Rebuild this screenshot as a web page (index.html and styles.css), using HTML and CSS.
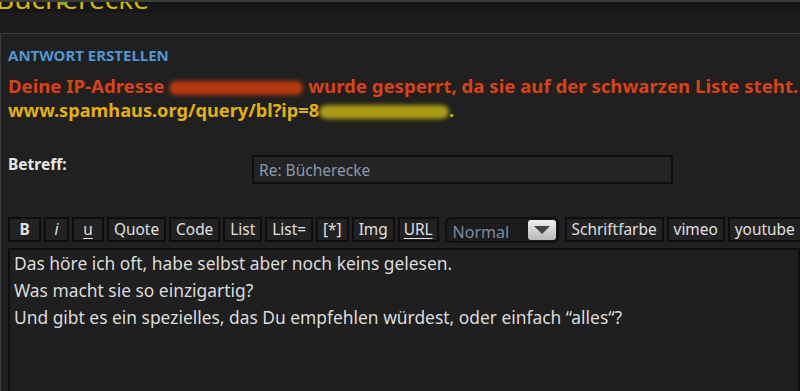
FILE: index.html
```html
<!DOCTYPE html>
<html lang="de">
<head>
    <meta charset="UTF-8">
    <meta name="viewport" content="width=device-width, initial-scale=1.0">
    <title>Antwort erstellen</title>
    <link rel="stylesheet" href="styles.css">
</head>
<body>
    <div class="site-head">
        <span class="head-icon"></span>
        <h1 class="forum-title">Bücherecke</h1>
    </div>

    <div class="panel">
        <h2 class="panel-title">ANTWORT ERSTELLEN</h2>
        <p class="error-line">Deine IP-Adresse <span class="smudge smudge-red"></span> wurde gesperrt, da sie auf der schwarzen Liste steht.</p>
        <p class="link-line">www.spamhaus.org/query/bl?ip=8<span class="smudge smudge-yellow"></span>.</p>

        <div class="subject-row">
            <label class="subject-label" for="subject">Betreff:</label>
            <input class="subject-input" id="subject" type="text" value="Re: Bücherecke">
        </div>

        <div class="toolbar">
            <button class="tb-btn tb-bold">B</button>
            <button class="tb-btn tb-italic">i</button>
            <button class="tb-btn tb-under">u</button>
            <button class="tb-btn">Quote</button>
            <button class="tb-btn">Code</button>
            <button class="tb-btn">List</button>
            <button class="tb-btn">List=</button>
            <button class="tb-btn">[*]</button>
            <button class="tb-btn">Img</button>
            <button class="tb-btn tb-url">URL</button>
            <div class="tb-select">
                <span class="tb-select-value">Normal</span>
                <span class="tb-select-arrow">
                    <svg width="16" height="8" viewBox="0 0 16 8"><path d="M0 0H16L8 8Z" fill="#444"/></svg>
                </span>
            </div>
            <button class="tb-btn">Schriftfarbe</button>
            <button class="tb-btn">vimeo</button>
            <button class="tb-btn">youtube</button>
        </div>

        <div class="message">Das höre ich oft, habe selbst aber noch keins gelesen.
Was macht sie so einzigartig?
Und gibt es ein spezielles, das Du empfehlen würdest, oder einfach “alles“?</div>
    </div>
</body>
</html>
```

FILE: styles.css
```css
* {
    margin: 0;
    padding: 0;
    box-sizing: border-box;
}

body {
    font-family: 'Noto Sans', 'Open Sans', sans-serif;
    background-color: #1c1c1c;
    color: #dddddd;
    overflow: hidden;
}

.site-head {
    height: 33px;
    border-top: 2px solid #3c3c3c;
    background: linear-gradient(#161616 0, #161616 10px, #1c1c1c 11px);
    position: relative;
    overflow: hidden;
}

.forum-title {
    font-size: 28px;
    font-weight: 400;
    color: #d4b800;
    line-height: 1;
    margin-top: -18px;
    margin-left: -4px;
}

.head-icon {
    position: absolute;
    left: 58px;
    top: -6px;
    width: 10px;
    height: 9px;
    border-radius: 50%;
    background: #7fb21e;
}

.panel {
    border-top: 1px solid #3a3a3a;
    border-left: 1px solid #3a3a3a;
    background-color: #202020;
    padding: 12px 0 0 7px;
    min-height: 358px;
}

.panel-title {
    font-size: 15px;
    font-weight: 700;
    color: #4f97d0;
    line-height: 18px;
}

.error-line,
.link-line {
    font-size: 18.2px;
    font-weight: 700;
    line-height: 24px;
    white-space: nowrap;
}

.error-line {
    color: #dc4210;
    font-size: 18.6px;
    margin-top: 10px;
}

.link-line {
    color: #e2b10c;
}

.smudge {
    display: inline-block;
    vertical-align: middle;
    height: 14px;
    border-radius: 7px;
    filter: blur(2px);
}

.smudge-red {
    width: 134px;
    background: #b8360c;
}

.smudge-yellow {
    width: 130px;
    background: #a89a10;
}

.subject-row {
    display: flex;
    align-items: flex-start;
    margin-top: 31px;
}

.subject-label {
    width: 244px;
    font-size: 15.5px;
    font-weight: 700;
    color: #e6e6e6;
}

.subject-input {
    width: 421px;
    height: 29px;
    margin-top: 2px;
    border: 2px solid #0f0f0f;
    background: #242424;
    color: #8b9ab0;
    font-family: inherit;
    font-size: 15.5px;
    padding: 0 5px;
    outline: none;
}

.toolbar {
    display: flex;
    gap: 3px;
    margin-top: 33px;
    white-space: nowrap;
}

.tb-btn {
    flex: none;
    height: 25px;
    border: 2px solid #0e0e0e;
    background: #222222;
    color: #e0e0e0;
    font-family: inherit;
    font-size: 15.4px;
    line-height: 21px;
    padding: 0 5px;
}

.tb-bold {
    width: 33px;
    font-weight: 700;
}

.tb-italic {
    width: 25px;
    font-style: italic;
}

.tb-under {
    width: 32px;
    text-decoration: underline;
    text-underline-offset: 3px;
}

.tb-url {
    padding: 0 4px;
    text-decoration: underline;
    text-underline-offset: 3px;
}

.tb-select {
    flex: none;
    display: flex;
    align-items: center;
    justify-content: space-between;
    width: 114px;
    height: 26px;
    border: 2px solid #0e0e0e;
    border-radius: 6px;
    background: #1c1c1c;
    padding: 0 1px 0 6px;
    margin: 0 3px 0 3px;
}

.tb-select-value {
    color: #7d8ca2;
    font-size: 16px;
    padding-top: 3px;
}

.tb-select-arrow {
    display: flex;
    align-items: center;
    justify-content: center;
    width: 28px;
    height: 20px;
    border-radius: 3px;
    background: linear-gradient(#f0f0f0, #b8b8b8);
}

.message {
    margin-top: 5px;
    height: 160px;
    border: 2px solid #0e0e0e;
    background: #1f1f1f;
    color: #dcdcdc;
    font-size: 17.4px;
    line-height: 27px;
    padding: 0 4px;
    white-space: pre-line;
}
```
